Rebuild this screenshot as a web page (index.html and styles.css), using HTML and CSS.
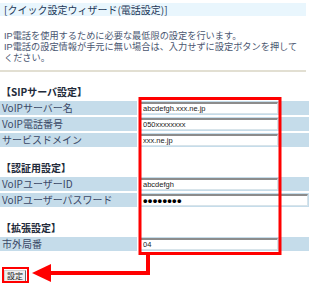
FILE: index.html
```html
<!DOCTYPE html>
<html lang="ja">
<head>
<meta charset="utf-8">
<title>クイック設定ウィザード</title>
<link rel="stylesheet" href="styles.css">
</head>
<body>
<div class="page">
  <div class="title">[クイック設定ウィザード(電話設定)]</div>
  <div class="desc">
    <div class="line">IP電話を使用するために必要な最低限の設定を行います。</div>
    <div class="line">IP電話の設定情報が手元に無い場合は、入力せずに設定ボタンを押して</div>
    <div class="line">ください。</div>
  </div>
  <div class="sep"></div>

  <section class="group first">
    <div class="head">【SIPサーバ設定】</div>
    <div class="row"><div class="label">VoIPサーバー名</div><div class="value"><input class="field" value="abcdefgh.xxx.ne.jp"></div></div>
    <div class="row"><div class="label">VoIP電話番号</div><div class="value"><input class="field" value="050xxxxxxxx"></div></div>
    <div class="row"><div class="label">サービスドメイン</div><div class="value"><input class="field" value="xxx.ne.jp"></div></div>
  </section>

  <section class="group">
    <div class="head">【認証用設定】</div>
    <div class="row"><div class="label">VoIPユーザーID</div><div class="value"><input class="field" value="abcdefgh"></div></div>
    <div class="row"><div class="label">VoIPユーザーパスワード</div><div class="value"><input class="field wide" type="password" value="abcdefgh"></div></div>
  </section>

  <section class="group">
    <div class="head">【拡張設定】</div>
    <div class="row"><div class="label">市外局番</div><div class="value"><input class="field" value="04"></div></div>
  </section>

  <div class="actions"><button class="btn">設定</button></div>

  <svg class="overlay" width="312" height="285" viewBox="0 0 312 285">
    <rect x="140" y="98.5" width="140" height="155" fill="none" stroke="#ff0000" stroke-width="3"/>
    <polyline points="148,254 148,273 48,273" fill="none" stroke="#ff0000" stroke-width="4"/>
    <polygon points="32,273 51,264 51,282" fill="#ff0000"/>
    <rect x="3" y="268" width="25" height="14" fill="none" stroke="#ff0000" stroke-width="2"/>
  </svg>
</div>
</body>
</html>
```

FILE: styles.css
```css
* { box-sizing: border-box; }
html, body { margin: 0; padding: 0; background: #ffffff; }
body {
  font-family: "Noto Sans CJK JP", "Noto Sans", sans-serif;
  font-size: 10px;
  color: #3a4866;
}
.page {
  position: relative;
  width: 312px;
  height: 285px;
  overflow: hidden;
}
.title {
  margin: 3px 0 0 0;
  width: 306px;
  height: 13px;
  line-height: 13px;
  padding-left: 4px;
  background: #e9f6fd;
  color: #1d3858;
  font-size: 10px;
  white-space: nowrap;
}
.desc {
  margin: 15px 0 0 0;
  padding-left: 4px;
  color: #4a5670;
}
.line {
  height: 11px;
  line-height: 11px;
  font-family: "Liberation Sans", "Noto Sans CJK JP", sans-serif;
  font-size: 9.2px;
  white-space: nowrap;
}
.sep {
  margin-top: 6px;
  width: 306px;
  height: 2px;
  background: #e2dfd2;
}
.group { margin-top: 14px; }
.group.first { margin-top: 13px; }
.head {
  height: 16px;
  line-height: 14px;
  padding-left: 1px;
  font-weight: bold;
  color: #222a3a;
  font-size: 10px;
}
.row {
  display: grid;
  grid-template-columns: 137px 170px;
  column-gap: 2px;
  height: 14px;
  margin-bottom: 2px;
}
.label {
  background: #c5dcea;
  line-height: 14px;
  padding-left: 2px;
  white-space: nowrap;
  font-size: 10px;
}
.value {
  background: #c5dcea;
  display: flex;
  align-items: center;
}
.field {
  margin: 0 0 0 1px;
  width: 138px;
  height: 12px;
  padding: 0 2px;
  border-style: solid;
  border-width: 2px 1px 1px 1px;
  border-color: #8c8c8c #d8e4ea #d8e4ea #a0a0a0;
  background: #ffffff;
  font-family: "Liberation Sans", sans-serif;
  font-size: 7.5px;
  color: #222222;
  outline: none;
}
.field.wide {
  width: 168px;
  font-size: 13px;
  font-weight: bold;
  color: #000000;
  letter-spacing: 0.3px;
}
.actions {
  margin-top: 16px;
  padding-left: 4px;
}
.btn {
  width: 22px;
  height: 12px;
  padding: 0;
  font-family: "Noto Sans CJK JP", sans-serif;
  font-size: 8px;
  line-height: 9px;
  color: #222;
  background: #efefef;
  border: 1px solid;
  border-color: #d0d0d0 #6a6a6a #6a6a6a #d0d0d0;
}
.overlay {
  position: absolute;
  left: 0;
  top: 0;
  pointer-events: none;
}
```
